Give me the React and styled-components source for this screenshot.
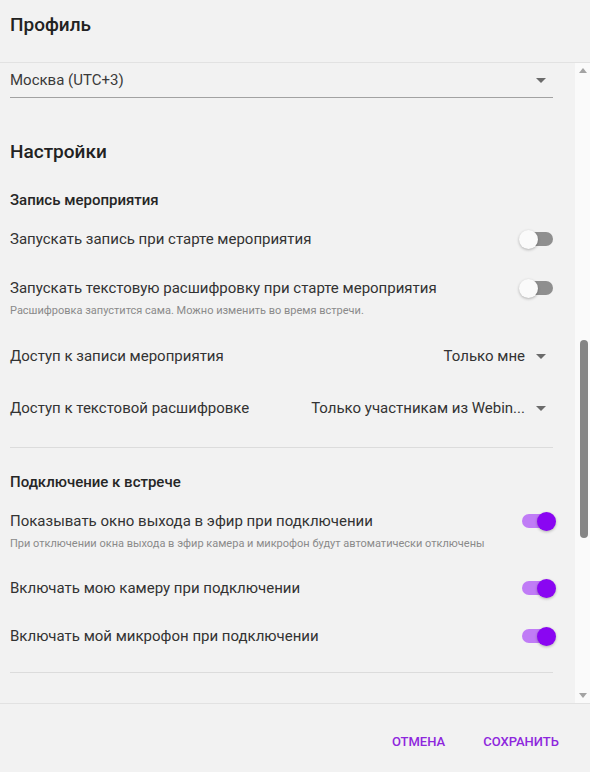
import React from 'react';
import styled, { createGlobalStyle } from 'styled-components';

const GlobalStyle = createGlobalStyle`
  html, body {
    margin: 0;
    padding: 0;
    background: #f2f2f2;
  }
  body {
    font-family: Roboto, "Noto Sans", "Liberation Sans", sans-serif;
    color: #2e2e2e;
  }
`;

const Caret = () => (
  <svg width="10" height="5" viewBox="0 0 10 5">
    <path d="M0 0 L10 0 L5 5 Z" fill="#6b6b6b" />
  </svg>
);

const Switch = ({ on }) => (
  <Track on={on ? 1 : 0}>
    <Knob on={on ? 1 : 0} />
  </Track>
);

const SelectValue = ({ children }) => (
  <ValueWrap>
    <ValueText>{children}</ValueText>
    <Caret />
  </ValueWrap>
);

export default function App() {
  return (
    <Dialog>
      <GlobalStyle />
      <Header>
        <Title>Профиль</Title>
      </Header>
      <Body>
        <Content>
          <Select>
            <span>Москва (UTC+3)</span>
            <Caret />
          </Select>

          <Heading>Настройки</Heading>

          <SectionTitle top={26}>Запись мероприятия</SectionTitle>
          <Row top={19}>
            <Label>Запускать запись при старте мероприятия</Label>
            <Switch />
          </Row>
          <Row top={29}>
            <Label>Запускать текстовую расшифровку при старте мероприятия</Label>
            <Switch />
          </Row>
          <Hint>Расшифровка запустится сама. Можно изменить во время встречи.</Hint>
          <Row top={28}>
            <Label>Доступ к записи мероприятия</Label>
            <SelectValue>Только мне</SelectValue>
          </Row>
          <Row top={32}>
            <Label>Доступ к текстовой расшифровке</Label>
            <SelectValue>Только участникам из Webin...</SelectValue>
          </Row>

          <Divider top={29} />

          <SectionTitle top={24}>Подключение к встрече</SectionTitle>
          <Row top={19}>
            <Label>Показывать окно выхода в эфир при подключении</Label>
            <Switch on />
          </Row>
          <Hint>При отключении окна выхода в эфир камера и микрофон будут автоматически отключены</Hint>
          <Row top={27}>
            <Label>Включать мою камеру при подключении</Label>
            <Switch on />
          </Row>
          <Row top={28}>
            <Label>Включать мой микрофон при подключении</Label>
            <Switch on />
          </Row>

          <Divider top={26} />
        </Content>
        <Scrollbar>
          <Arrow viewBox="0 0 8 5">
            <path d="M0 5 L4 0 L8 5 Z" fill="#a3a3a3" />
          </Arrow>
          <Thumb />
          <Arrow viewBox="0 0 8 5">
            <path d="M0 0 L8 0 L4 5 Z" fill="#a3a3a3" />
          </Arrow>
        </Scrollbar>
      </Body>
      <Footer>
        <TextButton>Отмена</TextButton>
        <TextButton>Сохранить</TextButton>
      </Footer>
    </Dialog>
  );
}

const Dialog = styled.div`
  width: 590px;
  height: 772px;
  display: flex;
  flex-direction: column;
  background: #f2f2f2;
  overflow: hidden;
`;

const Header = styled.div`
  height: 62px;
  flex: none;
  display: flex;
  align-items: center;
  padding: 0 10px;
  border-bottom: 1px solid #e2e2e2;
  box-sizing: content-box;
`;

const Title = styled.h2`
  margin: 0 0 12px;
  font-size: 19px;
  font-weight: 500;
  color: #222;
  line-height: 24px;
`;

const Body = styled.div`
  flex: 1;
  display: flex;
  min-height: 0;
`;

const Content = styled.div`
  flex: 1;
  padding: 0 22px 0 10px;
  display: flex;
  flex-direction: column;
  overflow: hidden;
`;

const Select = styled.div`
  height: 34px;
  display: flex;
  align-items: center;
  justify-content: space-between;
  padding-right: 7px;
  border-bottom: 1px solid #a2a2a2;
  font-size: 15px;
  color: #3a3a3a;
  flex: none;
`;

const Heading = styled.h3`
  margin: 42px 0 0;
  font-size: 19px;
  font-weight: 500;
  line-height: 24px;
  color: #222;
`;

const SectionTitle = styled.div`
  margin-top: ${p => p.top}px;
  font-size: 15px;
  font-weight: 500;
  line-height: 20px;
  color: #262626;
`;

const Row = styled.div`
  margin-top: ${p => p.top}px;
  height: 20px;
  display: flex;
  align-items: center;
  justify-content: space-between;
  flex: none;
`;

const Label = styled.span`
  font-size: 15px;
  line-height: 20px;
  color: #333;
`;

const Hint = styled.div`
  margin-top: 6px;
  font-size: 11px;
  line-height: 14px;
  color: #8a8a8a;
`;

const ValueWrap = styled.div`
  display: flex;
  align-items: center;
  gap: 11px;
  padding-right: 7px;
  font-size: 15px;
  color: #333;
`;

const ValueText = styled.span`
  white-space: nowrap;
`;

const Track = styled.div`
  position: relative;
  width: 31px;
  height: 14px;
  border-radius: 7px;
  background: ${p => (p.on ? '#c07cf6' : '#8f8f8f')};
  flex: none;
`;

const Knob = styled.div`
  position: absolute;
  top: -2.5px;
  left: ${p => (p.on ? '15px' : '-3px')};
  width: 19px;
  height: 19px;
  border-radius: 50%;
  background: ${p => (p.on ? '#8a06f2' : '#fafafa')};
  box-shadow: 0 1px 3px rgba(0, 0, 0, 0.28);
`;

const Divider = styled.div`
  margin-top: ${p => p.top}px;
  height: 1px;
  background: #dcdcdc;
  flex: none;
`;

const Scrollbar = styled.div`
  width: 15px;
  flex: none;
  background: #fafafa;
  display: flex;
  flex-direction: column;
  align-items: center;
  padding: 5px 0;
  box-sizing: border-box;
`;

const Arrow = styled.svg`
  width: 8px;
  height: 5px;
  flex: none;
`;

const Thumb = styled.div`
  width: 8px;
  height: 198px;
  margin: 267px 0 auto;
  border-radius: 4px;
  background: #858585;
  transform: translateX(1px);
`;

const Footer = styled.div`
  height: 69px;
  flex: none;
  border-top: 1px solid #e2e2e2;
  display: flex;
  align-items: center;
  justify-content: flex-end;
  gap: 22px;
  padding: 6px 23px 0 0;
  box-sizing: border-box;
`;

const TextButton = styled.button`
  border: none;
  background: none;
  padding: 6px 8px;
  font-family: inherit;
  font-size: 13px;
  font-weight: 500;
  text-transform: uppercase;
  color: #8e27dd;
  cursor: pointer;
`;
